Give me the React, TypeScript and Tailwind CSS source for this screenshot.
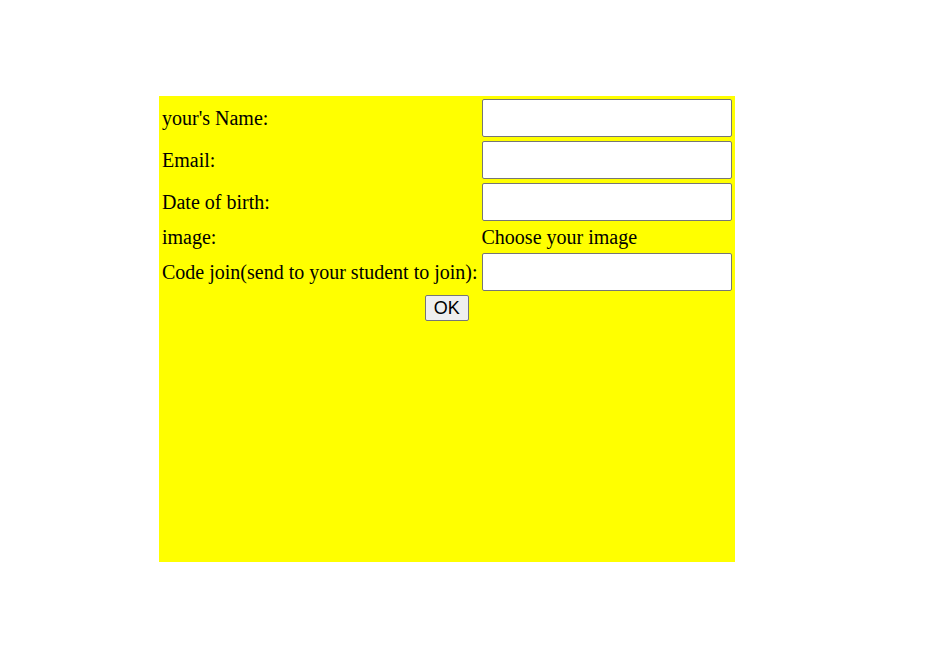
export default function App() {
  const rows = [
    { label: "your's Name:", field: true },
    { label: "Email:", field: true },
    { label: "Date of birth:", field: true },
    { label: "image:", field: false },
    { label: "Code join(send to your student to join):", field: true },
  ];

  return (
    <div className="min-h-[647px] bg-white pt-[96px] pl-[159px] font-['Liberation_Serif',serif] text-[20px] leading-[normal] text-black">
      <div className="w-[576px] h-[466px] bg-[#ffff00]">
        <form onSubmit={(e) => e.preventDefault()}>
          <table className="border-separate border-spacing-[2px]">
            <tbody>
              {rows.map((r) => (
                <tr key={r.label}>
                  <td className="p-[1px] pt-[2px] align-middle whitespace-nowrap">{r.label}</td>
                  <td className="p-[1px] pt-[2px] align-middle">
                    {r.field ? (
                      <input
                        type="text"
                        className="block -mt-[1px] w-[250px] h-[38px] bg-white border border-[#767676] rounded-[2px] px-1 font-['Liberation_Sans',sans-serif] text-[13px] outline-none"
                      />
                    ) : (
                      <label className="cursor-pointer">Choose your image</label>
                    )}
                  </td>
                </tr>
              ))}
              <tr>
                <td colSpan={2} className="p-[1px]">
                  <button
                    type="submit"
                    className="block mx-auto bg-[#efefef] border border-[#767676] rounded-[2px] w-[44px] h-[26px] font-['Liberation_Sans',sans-serif] text-[18px] leading-[20px]"
                  >
                    OK
                  </button>
                </td>
              </tr>
            </tbody>
          </table>
        </form>
      </div>
    </div>
  );
}
